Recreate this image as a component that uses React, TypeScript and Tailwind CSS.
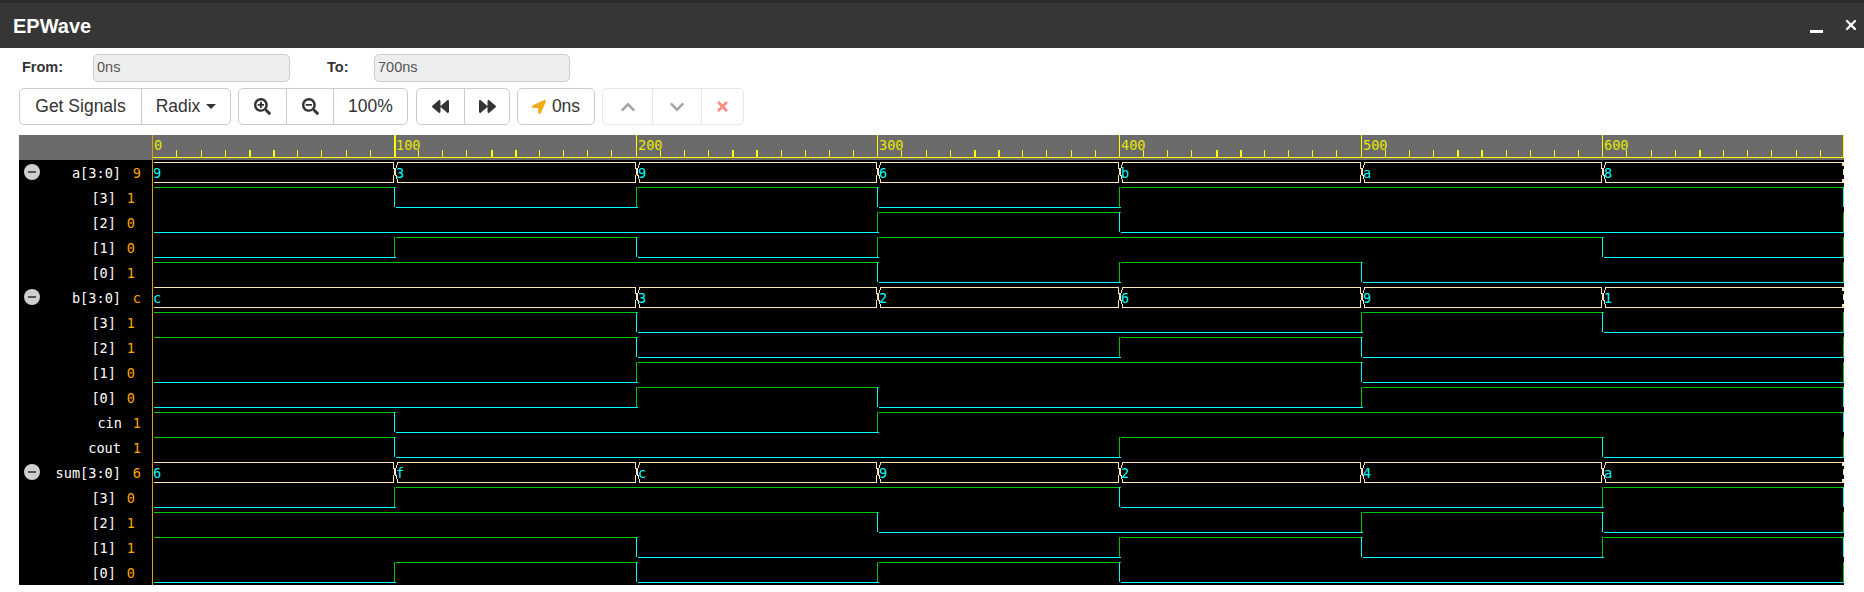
import React from 'react';
import { X } from 'lucide-react';
import { FaBackward, FaChevronDown, FaChevronUp, FaForward, FaLocationArrow, FaSearchMinus, FaSearchPlus, FaTimes } from 'react-icons/fa';

type Signal = {
  name: string;
  value: string;
  namePad: string;
  valuePad: string;
  group?: boolean;
  bus?: string[];
  bits?: number[];
};

const MONO = 'DejaVu Sans Mono, monospace';

const signals: Signal[] = [
  { name: 'a[3:0]', value: '9', namePad: 'pr-[31px]', valuePad: 'pr-[11px]', group: true, bus: ['9', '3', '9', '6', 'b', 'a', '8'] },
  { name: '[3]', value: '1', namePad: 'pr-[36px]', valuePad: 'pr-[17px]', bits: [1, 0, 1, 0, 1, 1, 1] },
  { name: '[2]', value: '0', namePad: 'pr-[36px]', valuePad: 'pr-[17px]', bits: [0, 0, 0, 1, 0, 0, 0] },
  { name: '[1]', value: '0', namePad: 'pr-[36px]', valuePad: 'pr-[17px]', bits: [0, 1, 0, 1, 1, 1, 0] },
  { name: '[0]', value: '1', namePad: 'pr-[36px]', valuePad: 'pr-[17px]', bits: [1, 1, 1, 0, 1, 0, 0] },
  { name: 'b[3:0]', value: 'c', namePad: 'pr-[31px]', valuePad: 'pr-[11px]', group: true, bus: ['c', 'c', '3', '2', '6', '9', '1'] },
  { name: '[3]', value: '1', namePad: 'pr-[36px]', valuePad: 'pr-[17px]', bits: [1, 1, 0, 0, 0, 1, 0] },
  { name: '[2]', value: '1', namePad: 'pr-[36px]', valuePad: 'pr-[17px]', bits: [1, 1, 0, 0, 1, 0, 0] },
  { name: '[1]', value: '0', namePad: 'pr-[36px]', valuePad: 'pr-[17px]', bits: [0, 0, 1, 1, 1, 0, 0] },
  { name: '[0]', value: '0', namePad: 'pr-[36px]', valuePad: 'pr-[17px]', bits: [0, 0, 1, 0, 0, 1, 1] },
  { name: 'cin', value: '1', namePad: 'pr-[30px]', valuePad: 'pr-[11px]', bits: [1, 0, 0, 1, 1, 1, 1] },
  { name: 'cout', value: '1', namePad: 'pr-[31px]', valuePad: 'pr-[11px]', bits: [1, 0, 0, 0, 1, 1, 0] },
  { name: 'sum[3:0]', value: '6', namePad: 'pr-[31px]', valuePad: 'pr-[11px]', group: true, bus: ['6', 'f', 'c', '9', '2', '4', 'a'] },
  { name: '[3]', value: '0', namePad: 'pr-[36px]', valuePad: 'pr-[17px]', bits: [0, 1, 1, 1, 0, 0, 1] },
  { name: '[2]', value: '1', namePad: 'pr-[36px]', valuePad: 'pr-[17px]', bits: [1, 1, 1, 0, 0, 1, 0] },
  { name: '[1]', value: '1', namePad: 'pr-[36px]', valuePad: 'pr-[17px]', bits: [1, 1, 0, 0, 1, 0, 1] },
  { name: '[0]', value: '0', namePad: 'pr-[36px]', valuePad: 'pr-[17px]', bits: [0, 1, 0, 1, 0, 0, 0] },
];

// page x of a time in ns
const tx = (ns: number) => Math.round(152.3 + (ns * 241.66) / 100);
const END = 1843;
const GREEN = '#00c800';
const CYAN = '#00ffff';
const PEACH = '#ffe4b5';
const YELLOW = '#ffff00';

const Ruler = () => {
  const ticks = [];
  for (let i = 0; i < 70; i++) {
    const x = tx(i * 10);
    if (i % 10 === 0) {
      ticks.push(<rect key={i} x={x} y={135} width={i === 10 ? 2 : 1} height={22} fill={YELLOW} />);
      ticks.push(
        <text key={`l${i}`} x={x + 2} y={150} fontSize={13.6} fontFamily={MONO} fill="#e6e600">
          {i * 10}
        </text>,
      );
    } else {
      const thick = i % 10 === 4 || (i % 10 === 5 && i < 60);
      ticks.push(<rect key={i} x={x} y={150} width={thick ? 2 : 1} height={7} fill={YELLOW} />);
    }
  }
  return (
    <g>
      <rect x={152} y={135} width={1692} height={25} fill="#6b6b6b" />
      {ticks}
      <rect x={152} y={157} width={1692} height={1} fill={YELLOW} />
      <rect x={END} y={135} width={1} height={22} fill={YELLOW} />
    </g>
  );
};

const BusRow = ({ top, vals }: { top: number; vals: string[] }) => {
  const bot = top + 20;
  const mid = top + 10;
  const parts: React.ReactNode[] = [];
  let start = 154;
  vals.forEach((v, i) => {
    const changes = i > 0 && v !== vals[i - 1];
    if (changes) {
      const t = tx(i * 100);
      parts.push(
        <polyline key={`x${i}`} points={`${t - 1},${top} ${t - 1},${top + 3} ${t + 1},${mid} ${t - 1},${bot - 3} ${t - 1},${bot}`} fill="none" stroke={PEACH} />,
        <polyline key={`y${i}`} points={`${t + 3},${top} ${t + 3},${top + 3} ${t + 1},${mid} ${t + 3},${bot - 3} ${t + 3},${bot}`} fill="none" stroke={PEACH} />,
        <rect key={`a${i}`} x={start} y={top} width={t - start} height={1} fill={PEACH} />,
        <rect key={`b${i}`} x={start} y={bot} width={t - start} height={1} fill={PEACH} />,
      );
      start = t + 3;
    }
    if (i === 0 || changes) {
      parts.push(
        <text key={`t${i}`} x={tx(i * 100) + (i === 0 ? 1 : 2)} y={top + 16} fontSize={13.6} fontFamily={MONO} fill={CYAN}>
          {v}
        </text>,
      );
    }
  });
  parts.push(
    <rect key="ea" x={start} y={top} width={END - start + 1} height={1} fill={PEACH} />,
    <rect key="eb" x={start} y={bot} width={END - start + 1} height={1} fill={PEACH} />,
    <rect key="ec" x={END - 1} y={top + 1} width={2} height={3} fill={PEACH} />,
    <rect key="ed" x={END - 1} y={bot - 3} width={2} height={3} fill={PEACH} />,
    <rect key="ee" x={END} y={mid - 3} width={1} height={6} fill={PEACH} />,
  );
  return <g shapeRendering="crispEdges">{parts}</g>;
};

const BitRow = ({ top, bits }: { top: number; bits: number[] }) => {
  const bot = top + 20;
  const parts: React.ReactNode[] = [];
  let start = 154;
  const level = (b: number) => (b ? top : bot);
  const color = (b: number) => (b ? GREEN : CYAN);
  bits.forEach((b, i) => {
    const next = bits[i + 1];
    if (next !== undefined && next !== b) {
      const t = tx((i + 1) * 100);
      parts.push(
        <rect key={`h${i}`} x={start} y={level(b)} width={t - start + 2} height={1} fill={color(b)} />,
        <rect key={`v${i}`} x={t} y={top} width={1} height={20} fill={color(next)} />,
      );
      start = t + 2;
    } else if (next === undefined) {
      parts.push(
        <rect key={`h${i}`} x={start} y={level(b)} width={END - start + 1} height={1} fill={color(b)} />,
        <rect key={`v${i}`} x={END} y={top} width={1} height={20} fill={color(b ? 0 : 1)} />,
      );
    }
  });
  return <g>{parts}</g>;
};

const Btn = ({ className, children }: { className: string; children: React.ReactNode }) => (
  <div className={`flex items-center justify-center gap-[6px] border-l border-[#ccc] first:border-l-0 ${className}`}>{children}</div>
);

const Group = ({ className, children }: { className?: string; children: React.ReactNode }) => (
  <div className={`flex h-[37px] rounded-[5px] border border-[#ccc] bg-white ${className ?? ''}`}>{children}</div>
);

export default function App() {
  return (
    <div className="h-[592px] w-[1864px] overflow-hidden bg-white text-[#333]" style={{ fontFamily: '"Liberation Sans", Arial, sans-serif' }}>
      <div className="h-[3px] bg-[#2c2c2c]" />
      <div className="flex h-[45px] items-center justify-between bg-[#363636] pl-[13px] pr-[5px]">
        <span className="text-[20px] font-bold text-white">EPWave</span>
        <div className="flex items-center gap-[20px]">
          <span className="mt-[11px] h-[3px] w-[13px] bg-white" />
          <X className="mb-[2px] size-[16px] text-white" strokeWidth={3.5} />
        </div>
      </div>

      <div className="flex h-[28px] items-center mt-[6px] pl-[19px] text-[14.5px]">
        <label className="w-[74px] pl-[3px] font-bold">From:</label>
        <div className="flex h-[28px] w-[197px] items-center rounded-[5px] border border-[#ccc] bg-[#eee] pl-[3px] text-[#555]">0ns</div>
        <label className="ml-[37px] w-[47px] font-bold">To:</label>
        <div className="flex h-[28px] w-[196px] items-center rounded-[5px] border border-[#ccc] bg-[#eee] pl-[3px] text-[#555]">700ns</div>
      </div>

      <div className="mt-[6px] flex gap-[7px] pl-[19px] text-[17.5px]">
        <Group className="w-[212px]">
          <Btn className="w-[121px]">Get Signals</Btn>
          <Btn className="flex-1">
            Radix
            <span className="h-0 w-0 border-x-[5px] border-t-[5px] border-x-transparent border-t-[#333]" />
          </Btn>
        </Group>
        <Group className="w-[170px]">
          <Btn className="w-[47px]">
            <FaSearchPlus size={17} />
          </Btn>
          <Btn className="w-[47px]">
            <FaSearchMinus size={17} />
          </Btn>
          <Btn className="flex-1">100%</Btn>
        </Group>
        <Group className="ml-px w-[94px]">
          <Btn className="w-[47px]">
            <FaBackward size={17} />
          </Btn>
          <Btn className="flex-1">
            <FaForward size={17} />
          </Btn>
        </Group>
        <Group className="w-[78px]">
          <Btn className="flex-1">
            <FaLocationArrow size={14} className="text-[#f5ab1e]" />
            0ns
          </Btn>
        </Group>
        <Group className="w-[142px] border-[#e6e6e6]">
          <Btn className="w-[49px] border-[#e6e6e6]">
            <FaChevronUp size={16} className="text-[#a3a3a3]" />
          </Btn>
          <Btn className="w-[49px] border-[#e6e6e6]">
            <FaChevronDown size={16} className="text-[#a3a3a3]" />
          </Btn>
          <Btn className="flex-1 border-[#e6e6e6]">
            <FaTimes size={15} className="text-[#ff8a8a]" />
          </Btn>
        </Group>
      </div>

      <div className="ml-[19px] mt-[10px] flex w-[1825px]">
        <div className="w-[133px] shrink-0 bg-black">
          <div className="h-[25px] bg-[#6b6b6b]" />
          {signals.map((s, i) => (
            <div key={i} className="flex h-[25px] items-center pl-[5px] pt-[3px] text-[13.6px] leading-none" style={{ fontFamily: MONO }}>
              {s.group ? (
                <span className="mb-[4px] flex size-[16px] shrink-0 items-center justify-center rounded-full bg-[#cfcfcf]">
                  <span className="h-[2px] w-[8px] bg-[#555]" />
                </span>
              ) : (
                <span className="w-[16px] shrink-0" />
              )}
              <span className={`min-w-0 flex-1 whitespace-nowrap text-right text-white ${s.namePad}`}>{s.name}</span>
              <span className={`absolute text-[#ffa500] ${s.valuePad}`} style={{ left: 0, width: 152, textAlign: 'right' }}>
                {s.value}
              </span>
            </div>
          ))}
        </div>
        <svg width={1692} height={450} viewBox="152 135 1692 450" className="block shrink-0 bg-black">
          <Ruler />
          <rect x={152} y={135} width={1} height={450} fill="#e0a010" />
          {signals.map((s, i) => {
            const top = 162 + i * 25;
            return s.bus ? <BusRow key={i} top={top} vals={s.bus} /> : <BitRow key={i} top={top} bits={s.bits!} />;
          })}
        </svg>
      </div>
    </div>
  );
}
